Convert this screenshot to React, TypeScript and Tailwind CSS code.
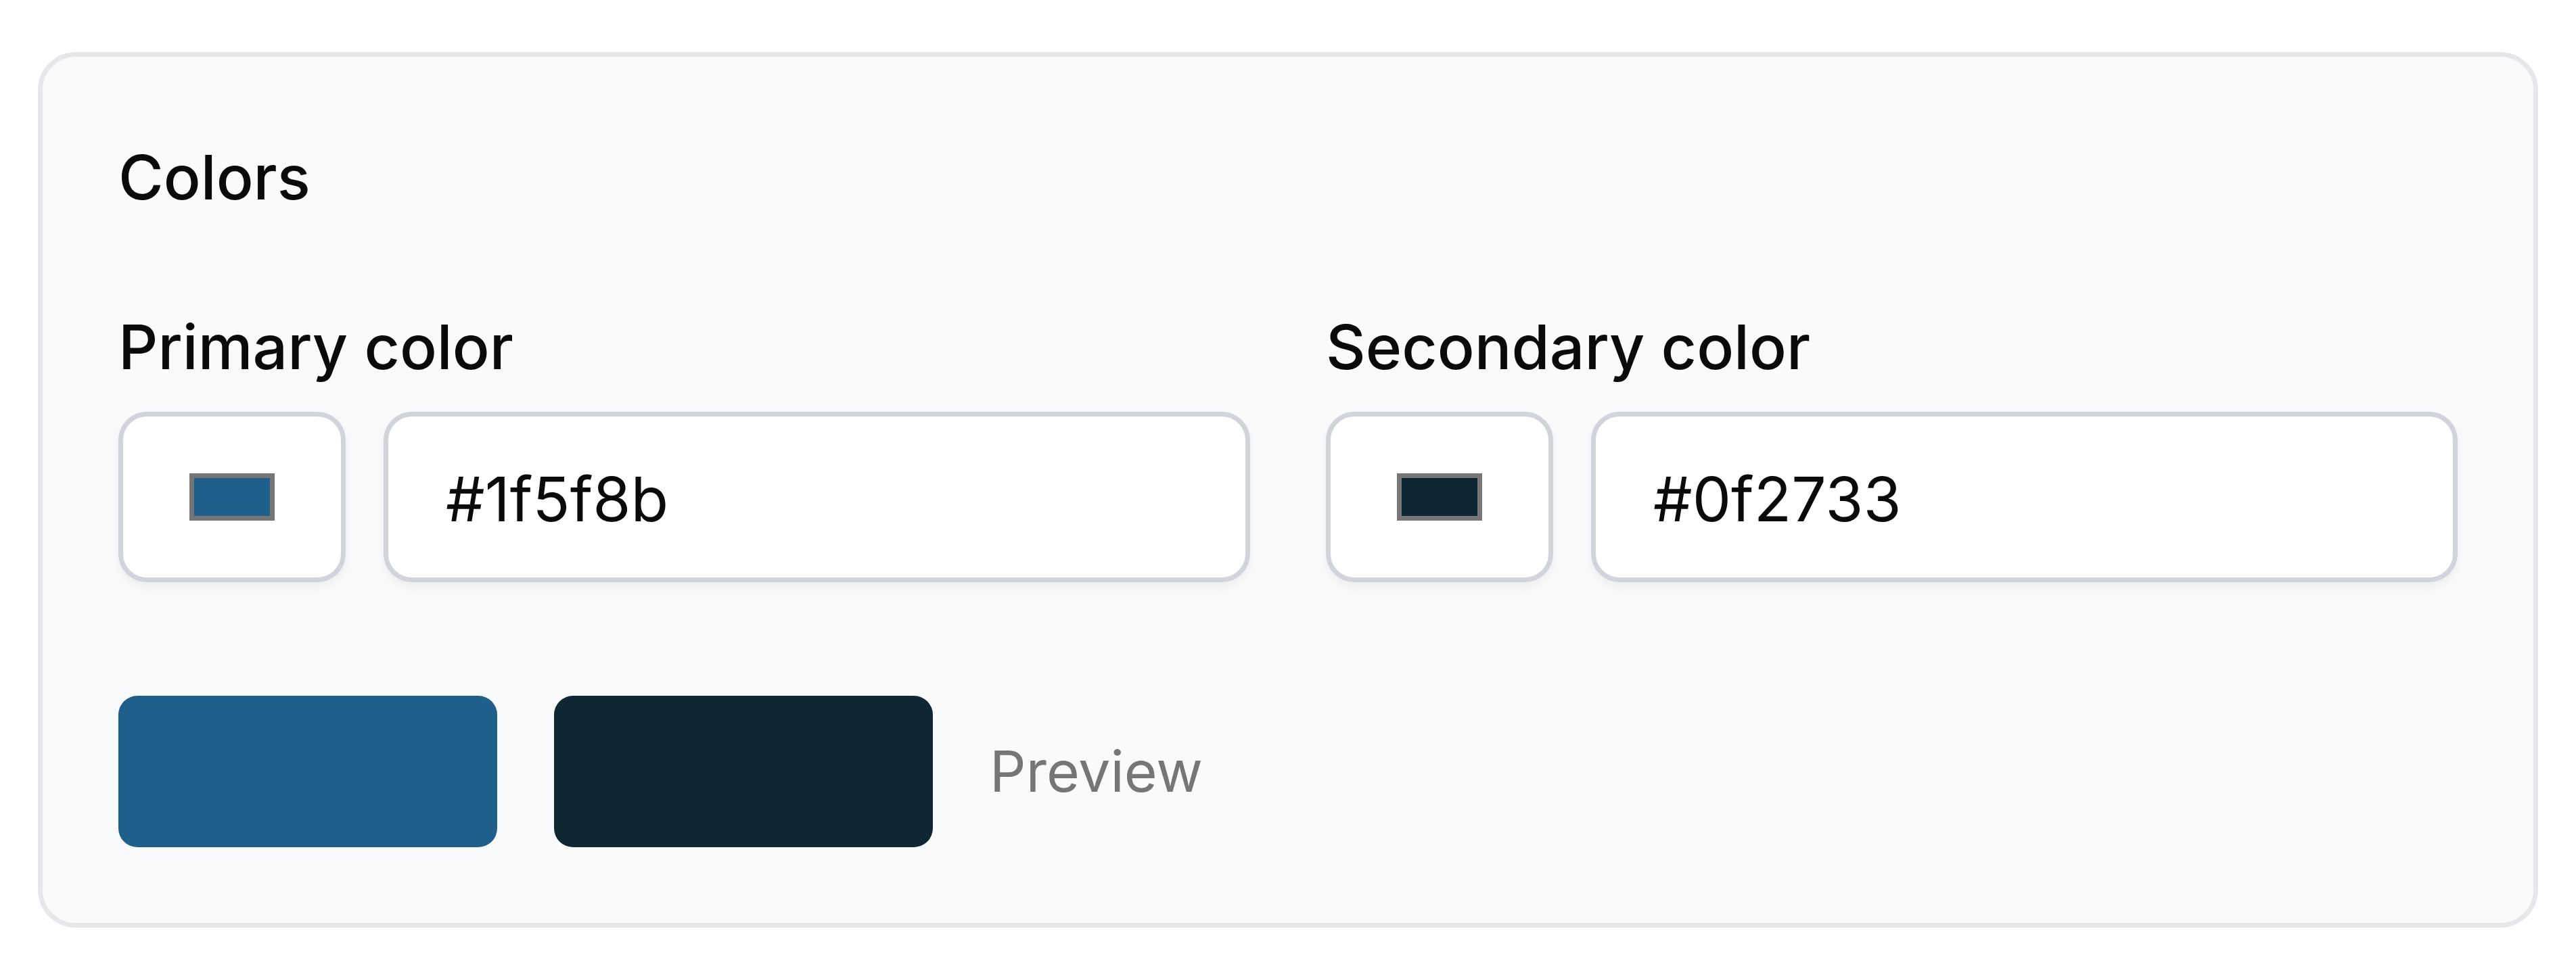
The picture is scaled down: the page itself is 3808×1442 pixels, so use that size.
import React from "react";

function ColorField({ label, value }: { label: string; value: string }) {
  return (
    <div className="flex flex-col">
      <div className="text-[91px] leading-[140px] font-medium text-[#0a0a0a]">{label}</div>
      <div className="mt-[26px] flex gap-[56px]">
        <div className="flex h-[252px] w-[336px] shrink-0 items-center justify-center rounded-[42px] border-[7px] border-[#d1d5db] bg-white shadow-[0_7px_14px_rgba(0,0,0,0.05)]">
          <div className="h-[70px] w-[126px] border-[7px] border-[#767676]" style={{ backgroundColor: value }} />
        </div>
        <input
          readOnly
          value={value}
          className="h-[252px] min-w-0 flex-1 rounded-[42px] border-[7px] border-[#d1d5db] bg-white px-[85px] pt-[6px] text-[91px] leading-[140px] text-[#0a0a0a] shadow-[0_7px_14px_rgba(0,0,0,0.05)] outline-none"
          style={{ fontFamily: "Inter, 'Noto Sans', sans-serif" }}
        />
      </div>
    </div>
  );
}

export default function App() {
  return (
    <div className="min-h-[1442px] bg-white px-[56px] pt-[77px]" style={{ fontFamily: "Inter, 'Noto Sans', sans-serif" }}>
      <div className="rounded-[56px] border-[7px] border-[#e5e7eb] bg-[#f9fafb] px-[112px] pt-[112px] pb-[112px]">
        <div className="text-[91px] leading-[132px] font-medium text-[#0a0a0a]">Colors</div>
        <div className="mt-[115px] grid grid-cols-2 gap-[112px]">
          <ColorField label="Primary color" value="#1f5f8b" />
          <ColorField label="Secondary color" value="#0f2733" />
        </div>
        <div className="mt-[168px] flex items-center gap-[84px]">
          <div className="h-[224px] w-[560px] rounded-[28px] bg-[#1f5f8b]" />
          <div className="h-[224px] w-[560px] rounded-[28px] bg-[#0f2733]" />
          <div className="text-[84px] leading-[130px] text-[#767676]">Preview</div>
        </div>
      </div>
    </div>
  );
}
